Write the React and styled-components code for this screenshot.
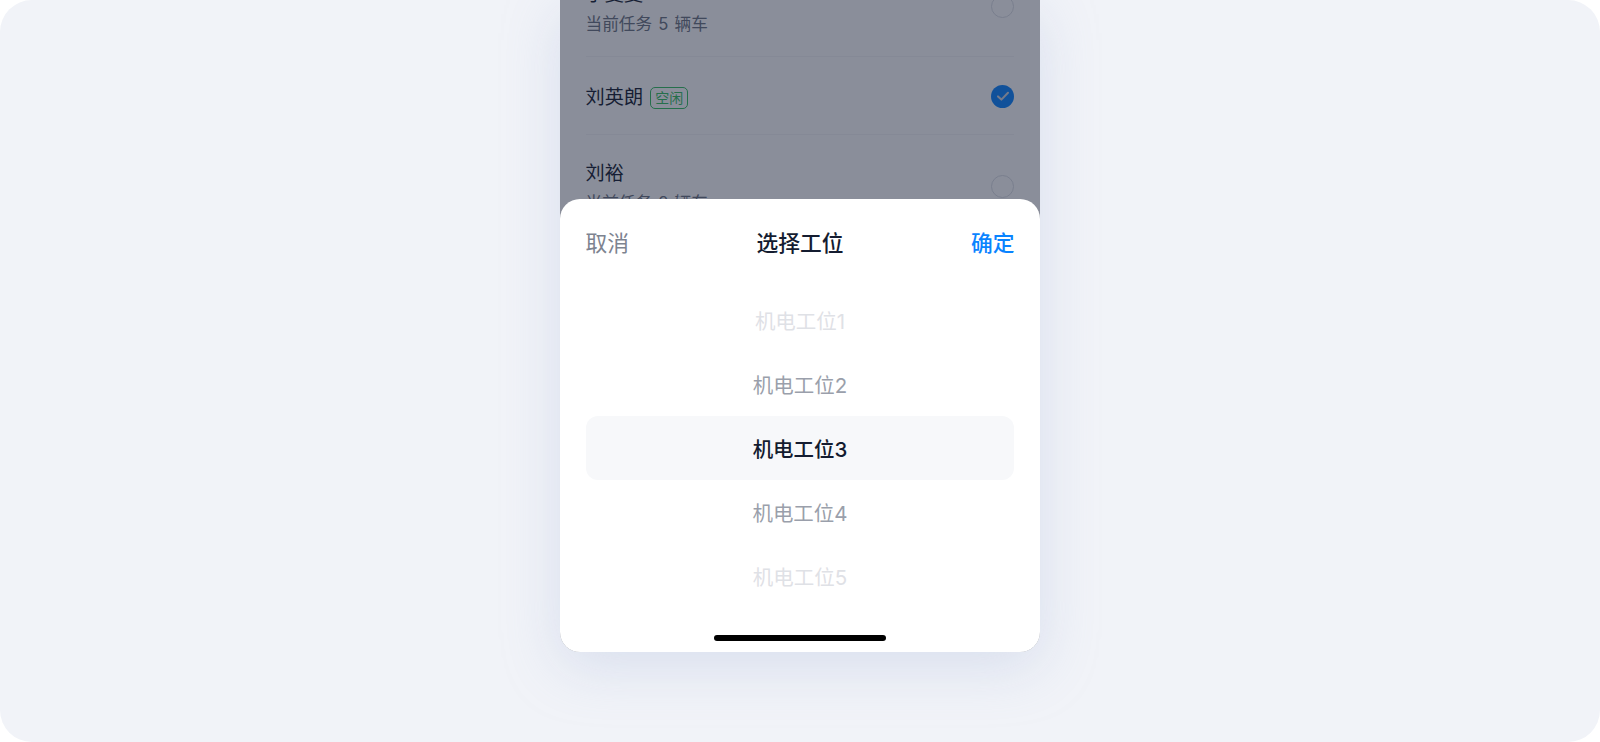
import React from "react";
import styled, { createGlobalStyle } from "styled-components";

const GlobalStyle = createGlobalStyle`
  html, body {
    margin: 0;
    background: #fff;
  }
  body {
    font-family: Inter, "Noto Sans CJK SC", "Liberation Sans", sans-serif;
  }
`;

const workers = [
  { name: "于雯雯", task: "当前任务 5 辆车" },
  { name: "刘英朗", free: true, checked: true },
  { name: "刘裕", task: "当前任务 2 辆车" },
];

const stations = [
  { label: "机电工位1", tone: "far" },
  { label: "机电工位2", tone: "near" },
  { label: "机电工位3", tone: "active" },
  { label: "机电工位4", tone: "near" },
  { label: "机电工位5", tone: "far" },
];

const toneColors = {
  far: "#dfe1e6",
  near: "#9a9fab",
  active: "#141c30",
};

function App() {
  return (
    <>
      <GlobalStyle />
      <Canvas>
        <Phone>
          <WorkerList>
            {workers.map((w) => (
              <WorkerRow key={w.name} $tall={!!w.task}>
                <WorkerInfo>
                  <NameLine>
                    {w.name}
                    {w.free && <FreeTag>空闲</FreeTag>}
                  </NameLine>
                  {w.task && <TaskLine>{w.task}</TaskLine>}
                </WorkerInfo>
                {w.checked ? (
                  <CheckedDot>
                    <svg width="14" height="14" viewBox="0 0 14 14" fill="none">
                      <path
                        d="M2 7.4 5.4 10.6 12 3.8"
                        stroke="#d5d7de"
                        strokeWidth="2"
                        strokeLinecap="round"
                        strokeLinejoin="round"
                      />
                    </svg>
                  </CheckedDot>
                ) : (
                  <EmptyDot />
                )}
              </WorkerRow>
            ))}
          </WorkerList>
          <Scrim />
          <Sheet>
            <SheetHeader>
              <CancelButton>取消</CancelButton>
              <SheetTitle>选择工位</SheetTitle>
              <ConfirmButton>确定</ConfirmButton>
            </SheetHeader>
            <Picker>
              {stations.map((s) => (
                <PickerItem key={s.label} $tone={s.tone}>
                  {s.label}
                </PickerItem>
              ))}
            </Picker>
            <HomeBar />
          </Sheet>
        </Phone>
      </Canvas>
    </>
  );
}

export default App;

const Canvas = styled.div`
  width: 1600px;
  height: 742px;
  background: #f1f3f8;
  border-radius: 32px;
  overflow: hidden;
  display: flex;
  justify-content: center;
  align-items: flex-start;
`;

const Phone = styled.div`
  position: relative;
  width: 480px;
  height: 652px;
  background: #fff;
  border-radius: 0 0 20px 20px;
  overflow: hidden;
  box-shadow: 0 14px 56px rgba(176, 188, 220, 0.38);
`;

const WorkerList = styled.div`
  margin-top: -45px;
  padding: 0 25.6px;
`;

const WorkerRow = styled.div`
  height: ${(props) => (props.$tall ? "102px" : "77.5px")};
  box-sizing: border-box;
  padding-top: 2px;
  display: flex;
  align-items: center;
  justify-content: space-between;
  border-bottom: 1px solid #f4f5f7;
`;

const WorkerInfo = styled.div`
  display: flex;
  flex-direction: column;
  gap: 3px;
  padding-top: 3px;
`;

const NameLine = styled.div`
  display: flex;
  align-items: center;
  gap: 7px;
  font-size: 19.2px;
  line-height: 29px;
  color: #141c30;
`;

const TaskLine = styled.div`
  font-size: 16.64px;
  line-height: 25px;
  word-spacing: 1.5px;
  color: #6b7280;
`;

const FreeTag = styled.span`
  box-sizing: border-box;
  width: 38px;
  height: 22px;
  border: 1px solid #34c05f;
  border-radius: 5px;
  display: flex;
  align-items: center;
  justify-content: center;
  font-size: 14px;
  line-height: 20px;
  color: #34c05f;
`;

const EmptyDot = styled.div`
  box-sizing: border-box;
  width: 23px;
  height: 23px;
  border: 1px solid #dcdfe5;
  border-radius: 50%;
`;

const CheckedDot = styled.div`
  width: 23px;
  height: 23px;
  border-radius: 50%;
  background: #0a84ff;
  display: flex;
  align-items: center;
  justify-content: center;
`;

const Scrim = styled.div`
  position: absolute;
  inset: 0;
  background: rgba(25, 34, 56, 0.51);
`;

const Sheet = styled.div`
  position: absolute;
  left: 0;
  right: 0;
  bottom: 0;
  height: 453px;
  background: #fff;
  border-radius: 20px 20px 0 0;
  display: flex;
  flex-direction: column;
  padding: 0 25.6px;
  box-sizing: border-box;
`;

const SheetHeader = styled.div`
  height: 84px;
  margin-bottom: 5px;
  flex-shrink: 0;
  display: flex;
  align-items: center;
  justify-content: space-between;
`;

const SheetTitle = styled.div`
  font-size: 21.76px;
  font-weight: 500;
  color: #141c30;
`;

const CancelButton = styled.button`
  padding: 0;
  border: none;
  background: none;
  font: inherit;
  font-size: 21.76px;
  color: #7d8390;
`;

const ConfirmButton = styled(CancelButton)`
  font-weight: 500;
  color: #0a84ff;
`;

const Picker = styled.div`
  display: flex;
  flex-direction: column;
`;

const PickerItem = styled.div`
  box-sizing: border-box;
  height: 64px;
  padding-bottom: 1px;
  display: flex;
  align-items: center;
  justify-content: center;
  border-radius: 12px;
  font-size: 20.48px;
  font-weight: ${(props) => (props.$tone === "active" ? 500 : 400)};
  color: ${(props) => toneColors[props.$tone]};
  background: ${(props) => (props.$tone === "active" ? "#f7f8fa" : "transparent")};
`;

const HomeBar = styled.div`
  width: 172px;
  height: 6.4px;
  margin: 27px auto 0;
  border-radius: 4px;
  background: #000;
`;
